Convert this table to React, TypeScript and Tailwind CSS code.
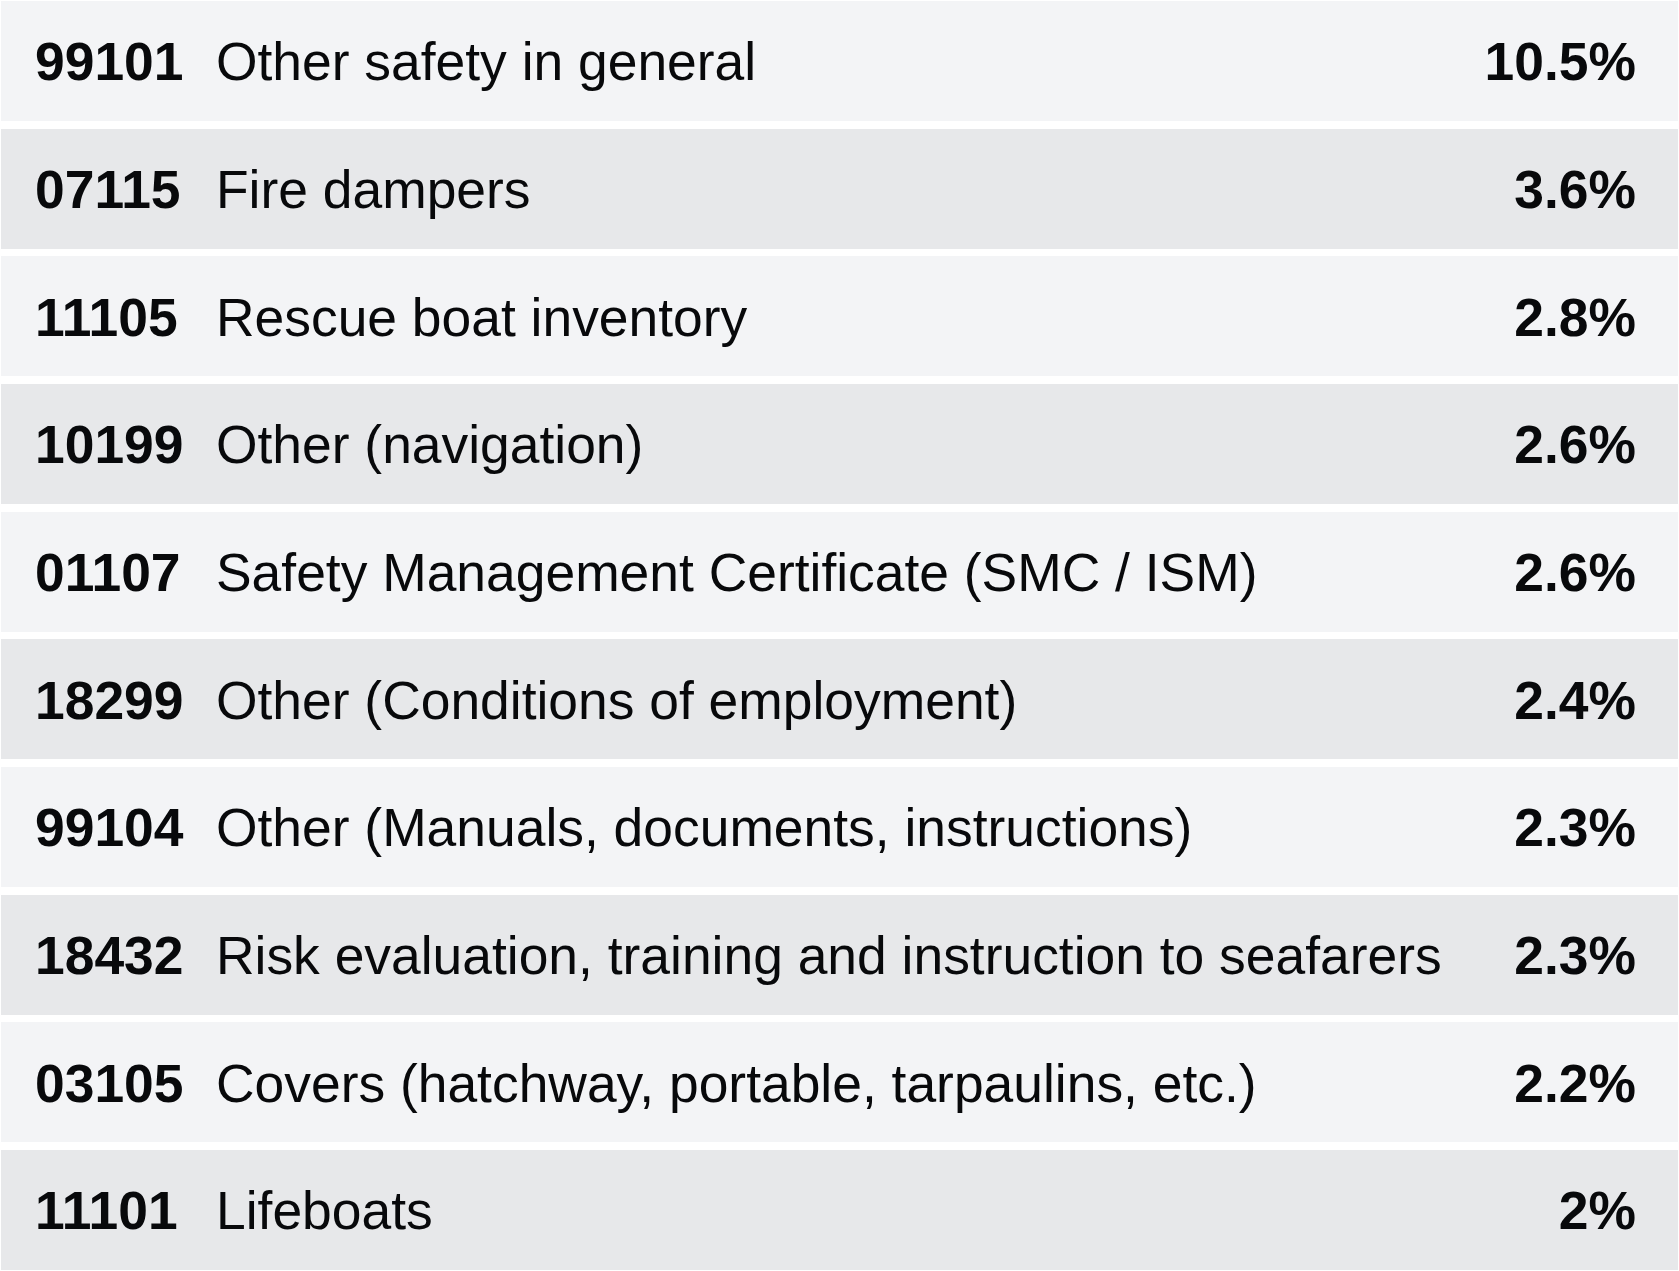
const rows = [
  { code: "99101", label: "Other safety in general", pct: "10.5%" },
  { code: "07115", label: "Fire dampers", pct: "3.6%" },
  { code: "11105", label: "Rescue boat inventory", pct: "2.8%" },
  { code: "10199", label: "Other (navigation)", pct: "2.6%" },
  { code: "01107", label: "Safety Management Certificate (SMC / ISM)", pct: "2.6%" },
  { code: "18299", label: "Other (Conditions of employment)", pct: "2.4%" },
  { code: "99104", label: "Other (Manuals, documents, instructions)", pct: "2.3%" },
  { code: "18432", label: "Risk evaluation, training and instruction to seafarers", pct: "2.3%" },
  { code: "03105", label: "Covers (hatchway, portable, tarpaulins, etc.)", pct: "2.2%" },
  { code: "11101", label: "Lifeboats", pct: "2%" },
];

export default function App() {
  return (
    <div className="flex min-h-[1271px] w-[1679px] flex-col gap-[7.67px] bg-white px-px pt-px font-['Liberation_Sans',Arial,sans-serif] text-[53.4px] text-[#08090b]">
      {rows.map((row, i) => (
        <div
          key={row.code}
          className={`flex h-[120px] items-center pt-[3px] pl-[34px] pr-[42px] ${
            i % 2 === 0 ? "bg-[#f3f4f6]" : "bg-[#e7e8ea]"
          }`}
        >
          <span className="w-[181px] shrink-0 font-bold">{row.code}</span>
          <span className="min-w-0 flex-1 whitespace-nowrap">{row.label}</span>
          <span className="shrink-0 text-right font-bold">{row.pct}</span>
        </div>
      ))}
    </div>
  );
}
